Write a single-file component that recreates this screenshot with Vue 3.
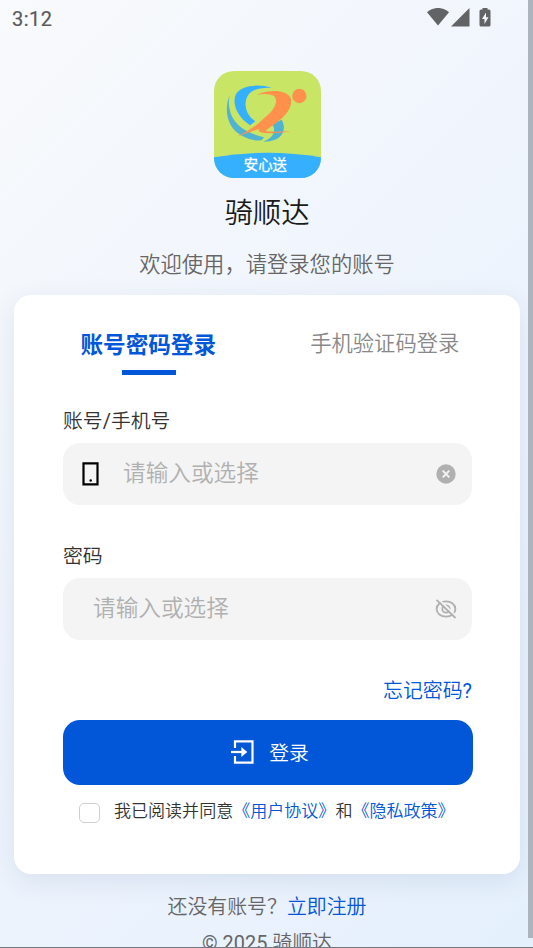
<script setup>
import { ref } from 'vue'

const activeTab = ref(0)
const tabs = ['账号密码登录', '手机验证码登录']
const account = ref('')
const password = ref('')
const agreed = ref(false)
</script>

<template>
  <div class="screen">
    <header class="status">
      <span>3:12</span>
      <svg class="status-icons" viewBox="0 0 66 20" width="66" height="20">
        <path d="M0 4.3C6.5-1.5 15.500-1.500 22 4.300L11 17.500Z" />
        <path d="M24 18.500H42.500V0Z" />
        <path d="M55.500 0h5v1.500h1.500q1.500 0 1.500 1.500v14q0 1.500-1.500 1.500h-8q-1.500 0-1.500-1.500V3q0-1.500 1.500-1.500h1.500z" />
        <path class="bolt" d="M59 4.500L55 11h2.500v5l4-6.800H59z" />
      </svg>
    </header>

    <section class="brand">
      <svg class="logo" viewBox="27 27 321 321" width="107" height="107">
        <path fill="#c8e566" d="M27 27h321v321H27z" />
        <path fill="#35b0ff" d="M27 286Q187 259 348 286V348H27Z" />
        <path fill="#50b3d2" d="M74 99C55 148 68 199 112 222Q140 238 170 235L177 226C125 213 82 190 73 138Q70 119 74 99Z" />
        <path fill="#35b0ff" d="M200 77C162 66 108 68 92 98C81 126 96 163 135 190L151 178C119 156 114 119 132 96C147 79 171 77 200 77Z" />
        <path fill="#50b3d2" d="M201 186L230 173C247 203 233 239 174 239C195 232 219 213 201 186Z" />
        <path fill="#ff914d" d="M155 98C188 82 250 81 258 111C264 143 232 172 194 197C177 207 178 208 207 209L259 208Q226 215 180 213Q156 211 162 201Q127 212 95 224Q144 202 177 169C208 145 223 117 206 101Q191 93 155 98Z" />
        <circle cx="283" cy="102" r="21.500" fill="#ff914d" />
        <text x="181" y="323" text-anchor="middle">安心送</text>
      </svg>
      <h1>骑顺达</h1>
      <p>欢迎使用，请登录您的账号</p>
    </section>

    <main class="card">
      <nav class="tabs">
        <div
          v-for="(tab, i) in tabs"
          :key="tab"
          class="tab"
          :class="{ active: activeTab === i }"
          @click="activeTab = i"
        >{{ tab }}</div>
      </nav>

      <div class="label">账号/手机号</div>
      <div class="field">
        <svg class="phone" viewBox="0 0 18 24" width="18" height="24">
          <path d="M1.500 1.300h14v21h-14z" fill="none" stroke="#000" stroke-width="2.200" />
          <circle cx="8.700" cy="18.500" r="1.200" />
        </svg>
        <input v-model="account" placeholder="请输入或选择" />
        <svg viewBox="0 0 20 20" width="20" height="20">
          <circle cx="10" cy="10" r="9.700" fill="#b0b0b0" />
          <path d="M6.700 6.700l6.600 6.600M13.300 6.700l-6.600 6.600" stroke="#f5f5f5" stroke-width="1.900" />
        </svg>
      </div>

      <div class="label second">密码</div>
      <div class="field">
        <input v-model="password" type="password" placeholder="请输入或选择" />
        <svg class="eye" viewBox="0 0 22 20" width="22" height="20">
          <ellipse cx="11" cy="10" rx="9.400" ry="7.700" />
          <circle cx="11" cy="10" r="3.700" />
          <path class="gap" d="M3.200 -.200L21.500 17.500" />
          <path d="M1.500 .800L20.500 19" />
        </svg>
      </div>

      <a class="forgot">忘记密码?</a>

      <button class="submit">
        <svg viewBox="0 0 24 26" width="24" height="26">
          <path d="M4 9V2.300H21.500V23.700H4V17" fill="none" stroke="#fff" stroke-width="2.200" />
          <path d="M0 13H12" stroke="#fff" stroke-width="2.200" />
          <path d="M10.300 8L16.300 13L10.300 18Z" fill="#fff" />
        </svg>
        <span>登录</span>
      </button>

      <div class="agreement">
        <span class="check" :class="{ checked: agreed }" @click="agreed = !agreed"></span>
        <span class="terms">我已阅读并同意<a>《用户协议》</a>和<a>《隐私政策》</a></span>
      </div>
    </main>

    <footer class="footer">
      <div>还没有账号？<a>立即注册</a></div>
      <div class="copyright">© 2025 骑顺达</div>
    </footer>

    <div class="scrollbar"></div>
    <div class="edge"></div>
  </div>
</template>

<style>
body {
  margin: 0;
  overflow: hidden;
}
</style>

<style scoped>
.screen {
  position: relative;
  box-sizing: border-box;
  width: 533px;
  height: 948px;
  overflow: hidden;
  display: flex;
  flex-direction: column;
  font-family: Roboto, "Noto Sans CJK SC DemiLight", "Noto Sans CJK SC", sans-serif;
  color: #333;
  background: linear-gradient(135deg, #f8fafc 0%, #f0f5fd 42%, #e5f0fd 100%);
}
a {
  color: #0256d8;
}
.status {
  display: flex;
  flex: none;
  justify-content: space-between;
  height: 71px;
  padding: 8px 40px 0 12px;
  box-sizing: border-box;
  font-size: 20px;
  line-height: 22px;
  letter-spacing: 0.500px;
  color: #5a5a5a;
  -webkit-text-stroke: 0.200px #5a5a5a;
}
.status-icons {
  fill: #626365;
}
.bolt {
  fill: #f1f5fc;
}
.brand {
  display: flex;
  flex: none;
  flex-direction: column;
  align-items: center;
  height: 224px;
  padding-left: 1px;
}
.logo {
  border-radius: 20px;
  flex: none;
}
.logo text {
  font-family: "Noto Sans CJK SC", sans-serif;
  font-size: 43px;
  fill: #fff;
  stroke: #fff;
  stroke-width: 0.800px;
}
h1 {
  margin: 16px 0 0;
  font-size: 28.400px;
  line-height: 40px;
  font-weight: 400;
  color: #1a1a1a;
}
.brand p {
  margin: 16px 0 0;
  font-size: 21.300px;
  line-height: 30px;
  color: #666;
}
.card {
  box-sizing: border-box;
  flex: none;
  width: 506px;
  height: 579px;
  margin-left: 14px;
  padding: 29px 48px 0 49px;
  border-radius: 17px;
  background: #fff;
  box-shadow: 0 7px 28px rgba(0, 40, 80, 0.090);
}
.tabs {
  display: flex;
  margin: 0 -31px 0 -33px;
  height: 52px;
}
.tab {
  display: flex;
  flex-direction: column;
  align-items: center;
  flex: 1;
  font-size: 21.300px;
  line-height: 40px;
  color: #888;
}
.tab.active {
  font-family: Roboto, "Noto Sans CJK SC", sans-serif;
  font-size: 22.600px;
  font-weight: 700;
  line-height: 43px;
  color: #0256d8;
}
.tab.active::after {
  content: "";
  width: 54px;
  height: 5px;
  margin: 3px 0 0 1px;
  background: #0256d8;
}
.label {
  margin-top: 30px;
  font-size: 19.850px;
  line-height: 32px;
}
.label.second {
  margin-top: 36px;
}
.field {
  display: flex;
  align-items: center;
  box-sizing: border-box;
  height: 62px;
  margin-top: 5px;
  padding: 0 16px 0 18px;
  border-radius: 17px;
  background: #f4f4f4;
}
.phone {
  margin-left: 1px;
  margin-right: 11px;
}
input {
  box-sizing: border-box;
  flex: 1;
  min-width: 0;
  height: 40px;
  padding: 0 0 0 12px;
  border: 0;
  outline: 0;
  background: transparent;
  font: 22.650px/40px Roboto, "Noto Sans CJK SC DemiLight", "Noto Sans CJK SC", sans-serif;
}
input::placeholder {
  color: #b0b0b0;
}
.eye {
  fill: none;
  stroke: #b0b0b0;
  stroke-width: 1.800;
  margin-right: -1px;
}
.gap {
  stroke: #f4f4f4;
}
.forgot {
  display: block;
  margin-top: 37px;
  text-align: right;
  font-size: 19.900px;
  line-height: 30px;
}
.submit {
  display: flex;
  align-items: center;
  justify-content: center;
  gap: 14px;
  width: 410px;
  height: 65px;
  margin-top: 13px;
  padding: 0 0 2px 4px;
  border: 0;
  border-radius: 17px;
  background: #0256d8;
  color: #fff;
  font: 19.800px/30px Roboto, "Noto Sans CJK SC DemiLight", "Noto Sans CJK SC", sans-serif;
}
.submit svg {
  margin-top: 1px;
}
.submit span {
  padding-top: 4px;
}
.agreement {
  display: flex;
  align-items: center;
  gap: 14px;
  margin-top: 13px;
  padding-left: 16px;
  font-family: "Noto Sans CJK SC DemiLight", "Noto Sans CJK SC", sans-serif;
  font-size: 17.050px;
  line-height: 27px;
  white-space: nowrap;
}
.terms {
  margin: -2px 0 2px;
}
.check {
  box-sizing: border-box;
  width: 21px;
  height: 20px;
  margin-top: 2px;
  border: 1.500px solid #d0d0d0;
  border-radius: 5px;
}
.check.checked {
  background: #0256d8;
}
.footer {
  flex: none;
  margin-top: 19px;
  padding-left: 1px;
  text-align: center;
  font-size: 19.900px;
  line-height: 30px;
  color: #666;
}
.copyright {
  margin-top: 6px;
}
.scrollbar {
  position: absolute;
  top: 0;
  right: 0;
  width: 5px;
  height: 938px;
  background: #adb4bd;
}
.edge {
  position: absolute;
  left: 0;
  bottom: 0;
  width: 533px;
  height: 1px;
  background: #73777d;
}
</style>
